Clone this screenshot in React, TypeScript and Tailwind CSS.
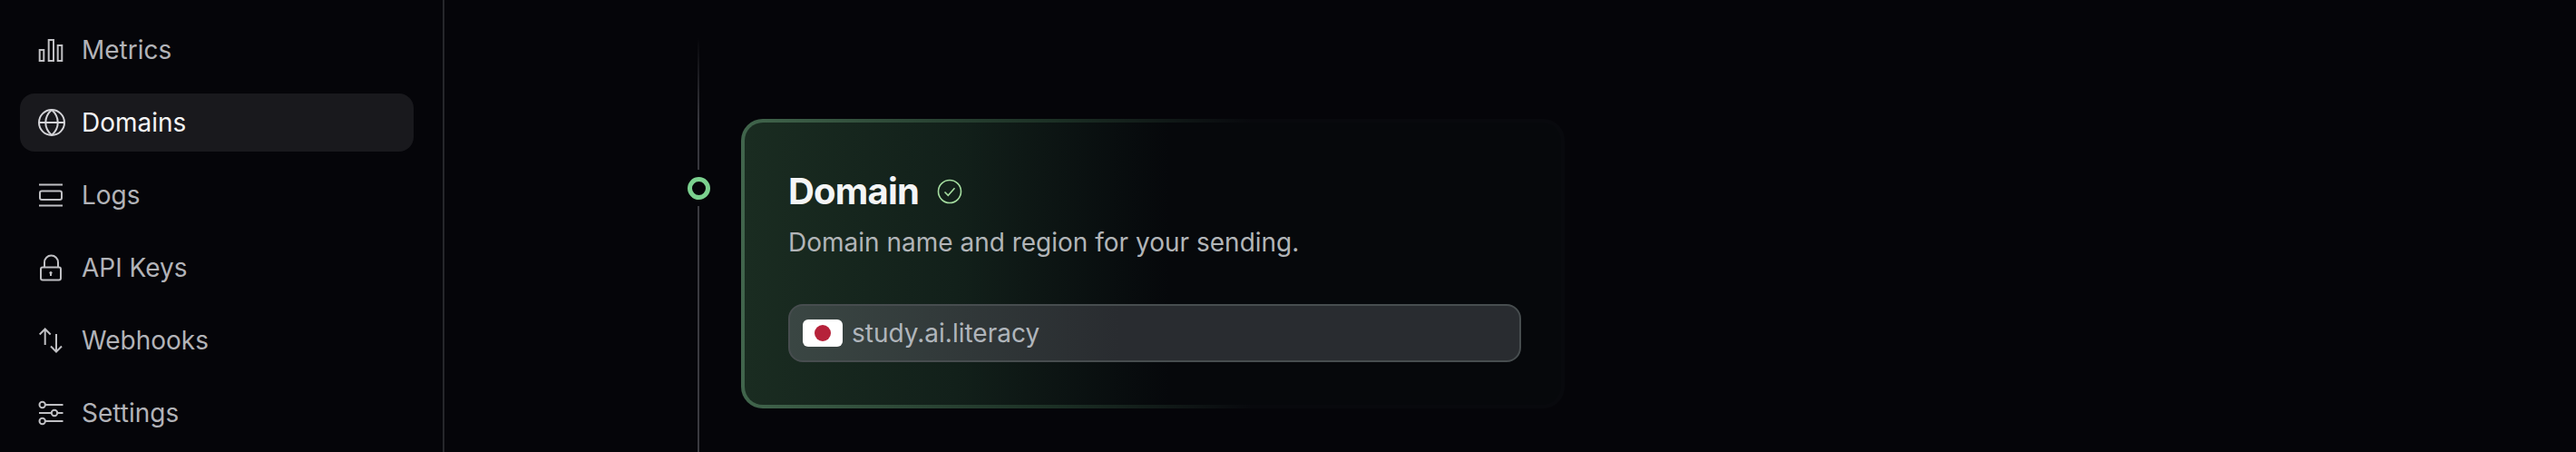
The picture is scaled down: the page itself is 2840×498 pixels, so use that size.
import React from 'react';

const navIconClass = 'w-8 h-8 shrink-0';

const MetricsIcon = () => (
  <svg viewBox="0 0 32 32" fill="none" stroke="currentColor" strokeWidth="2" className={navIconClass}>
    <rect x="2.7" y="16" width="4.6" height="12" />
    <rect x="12.7" y="5" width="5.3" height="23" />
    <rect x="22.7" y="11" width="4.6" height="17" />
  </svg>
);

const GlobeIcon = () => (
  <svg viewBox="0 0 32 32" fill="none" stroke="currentColor" strokeWidth="2" className={navIconClass}>
    <circle cx="16" cy="16" r="14" />
    <path d="M2 16h28M16 2c-9 8-9 20 0 28M16 2c9 8 9 20 0 28" />
  </svg>
);

const LogsIcon = () => (
  <svg viewBox="0 0 32 32" fill="none" stroke="currentColor" strokeWidth="2" className={navIconClass}>
    <path d="M2 4.5h26M2 27.5h26" />
    <rect x="3" y="11.5" width="24" height="9.5" rx="2" />
  </svg>
);

const LockIcon = () => (
  <svg viewBox="0 0 32 32" fill="none" stroke="currentColor" strokeWidth="2" className={navIconClass}>
    <rect x="4" y="15.5" width="22" height="14" rx="2" />
    <path d="M8 15.5V10a7.5 7.5 0 0 1 15 0v5.5" />
    <circle cx="15" cy="21.5" r="1.6" fill="currentColor" stroke="none" />
    <path d="M15 22v3" />
  </svg>
);

const WebhooksIcon = () => (
  <svg viewBox="0 0 32 32" fill="none" stroke="currentColor" strokeWidth="2" className={navIconClass}>
    <path d="M8.7 21V3.5M2.7 9.5l6-6 6 6M21 9v19.5M15 22.5l6 6 6-6" />
  </svg>
);

const SettingsIcon = () => (
  <svg viewBox="0 0 32 32" fill="none" stroke="currentColor" strokeWidth="2" className={navIconClass}>
    <circle cx="5.7" cy="7" r="3.2" />
    <circle cx="19" cy="16" r="3.2" />
    <circle cx="5.7" cy="25" r="3.2" />
    <path d="M9 7h19.5M2 16h13.8M22.2 16h6.3M9 25h19.5" />
  </svg>
);

const navItems = [
  { label: 'Metrics', icon: <MetricsIcon /> },
  { label: 'Domains', icon: <GlobeIcon />, active: true },
  { label: 'Logs', icon: <LogsIcon /> },
  { label: 'API Keys', icon: <LockIcon /> },
  { label: 'Webhooks', icon: <WebhooksIcon /> },
  { label: 'Settings', icon: <SettingsIcon /> },
];

export default function App() {
  return (
    <div className="flex w-[2840px] h-[498px] overflow-hidden bg-[#050509] font-['Inter',sans-serif]">
      <aside className="w-[490px] h-full shrink-0 border-r-2 border-[#26272b] pt-[23px] pl-[22px] pr-[32px] flex flex-col gap-4">
        {navItems.map((item) => (
          <div
            key={item.label}
            className={`flex items-center gap-[18px] h-16 shrink-0 pl-[19px] rounded-2xl text-[28px] ${
              item.active ? 'bg-[#19191d] text-[#f4f4f5]' : 'text-[#b2b3b8]'
            }`}
          >
            <span className={item.active ? 'text-[#d4d4d8]' : 'text-[#c0c0c4]'}>{item.icon}</span>
            <span className="-ml-px">{item.label}</span>
          </div>
        ))}
      </aside>

      <main className="flex h-full pl-[279px]">
        <div className="w-[2px] h-full flex flex-col items-center mr-[46px]">
          <div className="w-[2px] h-[187px] shrink-0 bg-gradient-to-b from-transparent from-[22%] to-[#37373d] to-[70%]" />
          <div className="w-[25px] h-[25px] mt-2 mb-[7px] shrink-0 rounded-full border-[5px] border-[#7bd18f]" />
          <div className="w-[2px] flex-1 bg-[#3a3a40]" />
        </div>

        <div className="mt-[131px] w-[908px] h-[319px] rounded-3xl p-1 bg-gradient-to-r from-[#41654c] via-[#1c3025] via-[38%] to-[#08090d] to-[62%]">
          <div className="w-full h-full rounded-[20px] bg-gradient-to-r from-[#1a2c21] via-[#12201a] via-[26%] to-[#06080b] to-[52%] pl-[48px] pr-[44px] pt-[49px]">
            <div className="flex items-center gap-5 h-[54px]">
              <h2 className="text-[40px] font-bold tracking-[-0.02em] text-[#f4f5f6] leading-none">Domain</h2>
              <svg viewBox="0 0 28 28" fill="none" stroke="#a4dc9f" strokeWidth="1.6" className="w-7 h-7">
                <circle cx="14" cy="14" r="12.5" />
                <path d="M8.5 14.5l3.8 3.8 7.2-8" />
              </svg>
            </div>
            <p className="text-[28px] leading-10 mt-[9px] text-[#b2b5b8]">Domain name and region for your sending.</p>
            <div className="mt-[48px] h-16 rounded-2xl border-2 border-[#474d4f] bg-gradient-to-r from-[#3a4643] to-[#292c30] to-[45%] flex items-center pl-[14px] gap-[10px]">
              <span className="w-11 h-[30px] rounded-md bg-white flex items-center justify-center shrink-0">
                <span className="w-[18px] h-[18px] rounded-full bg-[#b6223a]" />
              </span>
              <span className="text-[28px] text-[#b0b5bb]">study.ai.literacy</span>
            </div>
          </div>
        </div>
      </main>
    </div>
  );
}
